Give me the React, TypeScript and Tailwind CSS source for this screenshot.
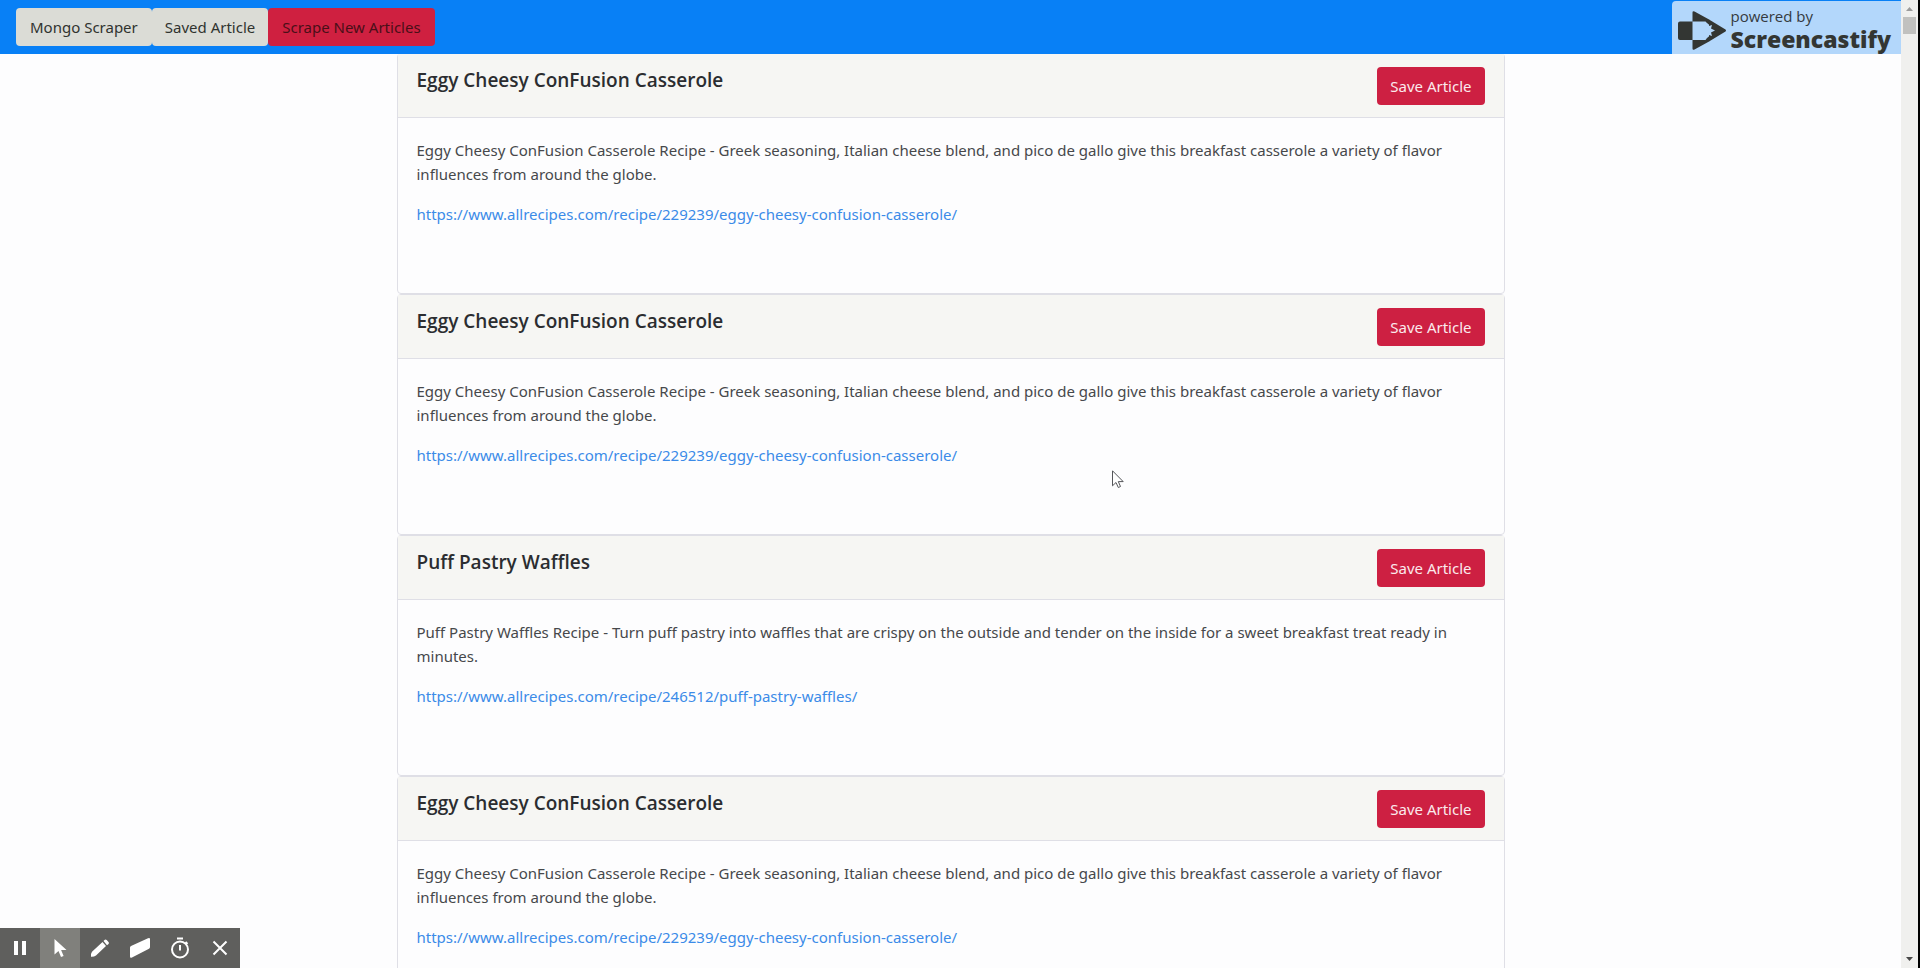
import React from "react";

type Article = { title: string; summary: string; url: string };

const casserole: Article = {
  title: "Eggy Cheesy ConFusion Casserole",
  summary:
    "Eggy Cheesy ConFusion Casserole Recipe - Greek seasoning, Italian cheese blend, and pico de gallo give this breakfast casserole a variety of flavor influences from around the globe.",
  url: "https://www.allrecipes.com/recipe/229239/eggy-cheesy-confusion-casserole/",
};

const waffles: Article = {
  title: "Puff Pastry Waffles",
  summary:
    "Puff Pastry Waffles Recipe - Turn puff pastry into waffles that are crispy on the outside and tender on the inside for a sweet breakfast treat ready in minutes.",
  url: "https://www.allrecipes.com/recipe/246512/puff-pastry-waffles/",
};

const articles: Article[] = [casserole, casserole, waffles, casserole];

function ArticleCard({ article }: { article: Article }) {
  return (
    <article className="h-[241px] shrink-0 rounded border border-[#dfdfe6] bg-[#fdfdfe]">
      <header className="flex items-start justify-between border-b border-[#dfdfe6] bg-[#f6f6f3] px-[19px] pt-[13px] pb-3">
        <h3 className="pt-px font-['Open_Sans','Noto_Sans',sans-serif] text-[19px] leading-6 font-semibold text-[#2b2d30]">
          {article.title}
        </h3>
        <button type="button" className="h-[38px] rounded bg-[#cd2042] px-[13px] text-[15px] text-[#fbe9ec]">
          Save Article
        </button>
      </header>
      <div className="px-[19px] py-5">
        <p className="mb-4 text-[15px] leading-6 text-[#46484b]">{article.summary}</p>
        <a href={article.url} className="text-[15px] leading-6 text-[#3b8be8]">
          {article.url}
        </a>
      </div>
    </article>
  );
}

function Watermark() {
  return (
    <div className="flex h-[53px] items-start self-end rounded-tl bg-[#b3d7fb] pr-2.5 pl-1.5 font-['Open_Sans',sans-serif]">
      <svg width="50" height="40" viewBox="0 0 50 40" className="mt-[10px]" aria-hidden="true">
        <path
          fill="#333633"
          d="M2 10.500h12.500V29H2q-2 0-2-2V12.500q0-2 2-2zM14.500 1.500q0-2 2-1L32 9v5.500l-3-2.500-1.500-1.500h-13zM14.500 29h13l1.500-2 3-2.500V30L16.500 38.500q-2 1-2-1zM31 8.500l16.500 10q1 1 0 2L31 30.500v-6.500l3 1-1-3.500 4-2-4-2 1-3.500-3 1z"
        />
      </svg>
      <div className="flex flex-col pt-1.5 pl-0.5 text-[#353a40]">
        <span className="text-[15px] leading-[18px]">powered by</span>
        <span className="text-[23px] leading-[28px] font-extrabold text-[#333633]">Screencastify</span>
      </div>
    </div>
  );
}

const tools = [
  {
    name: "Pause",
    icon: <path fill="currentColor" d="M4 3h4v14H4zM12 3h4v14h-4z" />,
  },
  {
    name: "Pointer",
    icon: <path fill="currentColor" d="M4.500 1v15.500l4-3.500 2.500 6 2.600-1.100-2.500-5.900h5.400z" />,
  },
  {
    name: "Pen",
    icon: <path fill="currentColor" d="M1 18.800q-.5-3 1-5L12.500 4l3.500 4L6 17.500q-2 1.500-5 1.300zM13.500 3l1-1q1-1 2.200 0l1.800 2q1 1 0 2L17 7.200z" />,
  },
  {
    name: "Eraser",
    icon: <path fill="currentColor" d="M0 9.500q0-1 1-1.500L18 .3q2-1 2 1V9q0 1-1 1.700L2 19.500q-2 1-2-1z" />,
  },
  {
    name: "Timer",
    icon: (
      <g fill="none" stroke="currentColor" strokeWidth="2">
        <circle cx="10" cy="11.500" r="8" />
        <path d="M7 0.500h6M10 7v5.500M15.500 4l2 2" />
      </g>
    ),
  },
  {
    name: "Close",
    icon: <path fill="none" stroke="currentColor" strokeWidth="2" d="M3.500 3.500l13 13M16.500 3.500l-13 13" />,
  },
];

export default function App() {
  return (
    <div className="relative flex h-screen overflow-hidden bg-[#fdfdfe] font-['Noto_Sans','Open_Sans',sans-serif]">
      <div className="flex min-w-0 flex-1 flex-col">
        <nav className="z-10 flex h-[54px] shrink-0 items-center justify-between bg-[#0880f6] pl-4">
          <div className="flex text-[15px] text-[#30332f]">
            <button type="button" className="h-[38px] rounded bg-[#dbdcd6] px-3.5">Mongo Scraper</button>
            <button type="button" className="h-[38px] rounded bg-[#dbdcd6] px-[13px]">Saved Article</button>
            <button type="button" className="h-[38px] rounded bg-[#cf2040] px-3.5 text-[#4a0f18]">
              Scrape New Articles
            </button>
          </div>
          <Watermark />
        </nav>
        <main className="mx-auto -mt-px flex min-h-0 w-full max-w-[1108px] flex-1 flex-col overflow-hidden">
          {articles.map((article, i) => (
            <ArticleCard key={i} article={article} />
          ))}
        </main>
      </div>

      <div className="flex w-[19px] shrink-0 flex-col items-center justify-between border-r-2 border-black bg-[#f0f0ee]" aria-hidden="true">
        <div className="flex w-full flex-col items-center">
          <svg width="17" height="17" viewBox="0 0 17 17">
            <path fill="#9b9b9b" d="M5 11l3.500-4 3.500 4z" />
          </svg>
          <div className="h-[17px] w-[13px] bg-[#c1c1bf]" />
        </div>
        <svg width="17" height="17" viewBox="0 0 17 17">
          <path fill="#484848" d="M5 6h7l-3.500 4z" />
        </svg>
      </div>

      <div className="absolute bottom-0 left-0 z-20 flex h-10 bg-[#5f5f5d] text-white" role="toolbar" aria-label="Recording tools">
        {tools.map((tool) => (
          <button
            key={tool.name}
            type="button"
            aria-label={tool.name}
            className={
              tool.name === "Pointer"
                ? "flex w-10 items-center justify-center bg-[#80807c]"
                : "flex w-10 items-center justify-center"
            }
          >
            <svg width="20" height="20" viewBox="0 0 20 20" className="overflow-visible" aria-hidden="true">
              {tool.icon}
            </svg>
          </button>
        ))}
      </div>

      <svg width="12" height="19" viewBox="0 0 12 19" className="absolute top-[470px] left-[1112px] z-20" aria-hidden="true">
        <path d="M.5.800v15l3.500-3.300 2.300 5 2.200-1-2.200-4.900h4.900z" fill="#fff" stroke="#55565a" />
      </svg>
    </div>
  );
}
